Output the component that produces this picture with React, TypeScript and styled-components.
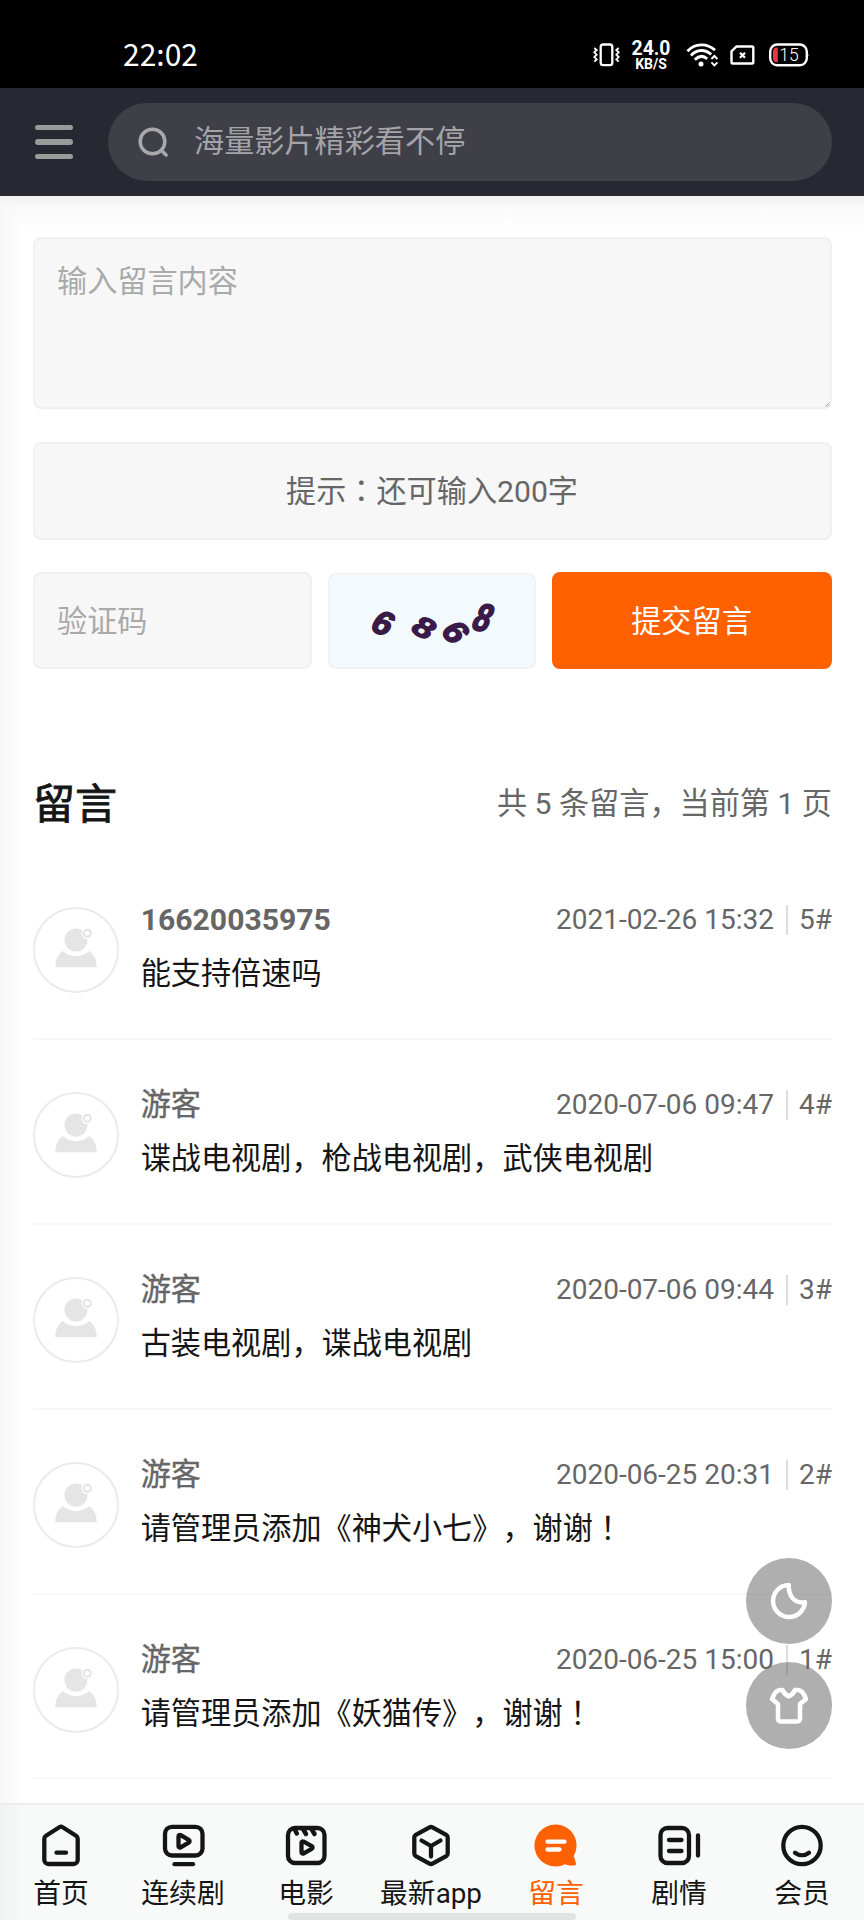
import React from "react";
import styled, { createGlobalStyle } from "styled-components";

const GlobalStyle = createGlobalStyle`
  *, *::before, *::after { box-sizing: border-box; }
  body {
    margin: 0;
    background: #fff;
    color: #151515;
    font-family: Roboto, "Noto Sans CJK SC", sans-serif;
    font-size: 30.15px;
    line-height: 1;
    text-spacing-trim: space-all;
  }
  button, input, textarea { font: inherit; color: inherit; }
`;

const Page = styled.div`
  position: relative;
  width: 864px;
  height: 1920px;
  display: flex;
  flex-direction: column;
  overflow: hidden;
  background: #fff;
`;

const StatusBar = styled.div`
  flex: none;
  height: 88px;
  padding: 22px 54px 0 123px;
  display: flex;
  align-items: center;
  justify-content: space-between;
  background: #000;
  color: #fff;
`;

const Clock = styled.div`
  margin-top: -4px;
  font: 400 30px/30px "Noto Sans CJK SC", sans-serif;
`;

const StatusIcons = styled.div`
  display: flex;
  align-items: center;
  svg { display: block; }
`;

const NetworkIcons = styled.div`
  display: flex;
  align-items: center;
  svg + svg { margin-left: 11px; }
  svg:last-child { margin-left: 14px; }
`;

const Speed = styled.div`
  width: 40px;
  margin: 2px 15px 0 11px;
  display: flex;
  flex-direction: column;
  align-items: center;
  font-weight: 700;
`;

const SpeedValue = styled.span`
  font-size: 19.4px;
  line-height: 16px;
`;

const SpeedUnit = styled.span`
  font-size: 14px;
  line-height: 14px;
`;

const Header = styled.header`
  flex: none;
  height: 108px;
  padding: 0 32px 0 35px;
  display: flex;
  align-items: center;
  background: #282832;
`;

const MenuButton = styled.button`
  width: 38px;
  height: 35px;
  margin-right: 35px;
  padding: 0;
  border: 0;
  background: none;
  display: flex;
  flex-direction: column;
  justify-content: space-between;
  span { height: 5.4px; border-radius: 3px; background: #999a9a; }
`;

const SearchBox = styled.div`
  flex: 1;
  height: 78px;
  padding-left: 30px;
  border-radius: 39px;
  display: flex;
  align-items: center;
  background: #3f3f48;
  color: #a4a4a8;
  svg { display: block; margin-right: 25px; }
`;

const Main = styled.main`
  flex: 1;
  min-height: 0;
  overflow: hidden;
  padding: 41px 32px 0 33px;
  background:
    linear-gradient(to bottom, #f0f0f0, rgba(248, 248, 248, 0.8) 10px, rgba(255, 255, 255, 0) 34px) top / 100% 34px no-repeat,
    linear-gradient(to right, #f7f7f7, rgba(255, 255, 255, 0) 24px),
    #fff;
`;

const MessageForm = styled.form`
  display: flex;
  flex-direction: column;
`;

const MessageInput = styled.textarea`
  display: block;
  width: 100%;
  height: 172px;
  margin-bottom: 33px;
  padding: 26px 22px;
  border: 2px solid #f0f0f0;
  border-radius: 8px;
  outline: 0;
  background: #f7f7f7;
  line-height: 34px;
  resize: none;
  &::placeholder { color: #aaa; opacity: 1; }
`;

const InputWrap = styled.div`
  position: relative;
`;

const Grip = styled.svg`
  position: absolute;
  right: 2px;
  bottom: 35px;
`;

const Hint = styled.div`
  height: 98px;
  margin-bottom: 32px;
  padding: 3px 1px 0 0;
  border: 2px solid #f0f0f0;
  border-radius: 8px;
  background: #f7f7f7;
  color: #666;
  display: flex;
  align-items: center;
  justify-content: center;
`;

const CenteredMark = styled.span`
  font-family: "Noto Sans CJK TC", sans-serif;
  line-height: 0;
`;

const SubmitRow = styled.div`
  display: flex;
  align-items: flex-end;
  gap: 16px;
  height: 97px;
`;

const CodeInput = styled.input`
  width: 279px;
  height: 97px;
  padding: 1px 22px 0;
  border: 2px solid #f0f0f0;
  border-radius: 8px;
  outline: 0;
  background: #f7f7f7;
  &::placeholder { color: #aaa; opacity: 1; }
`;

const Captcha = styled.div`
  width: 208px;
  height: 96px;
  border: 2px solid #eff1f2;
  border-radius: 8px;
  background: #f3fafe;
  svg { display: block; }
`;

const Submit = styled.button`
  flex: 1;
  height: 97px;
  padding: 3px 1px 0 0;
  border: 0;
  border-radius: 8px;
  background: #ff6000;
  color: #fff;
`;

const ListHeader = styled.div`
  margin-top: 103px;
  height: 63px;
  display: flex;
  align-items: center;
  justify-content: space-between;
  color: #666;
  h2 {
    margin: 3px 0 0;
    color: #151515;
    font-size: 42px;
    font-weight: 400;
    line-height: 50px;
    -webkit-text-stroke: 0.8px currentColor;
  }
  span { margin-top: 2px; }
`;

const Comments = styled.ul`
  list-style: none;
  margin: 20px 0 0;
  padding: 0;
`;

const Comment = styled.li`
  height: 184.9px;
  padding: 52px 0 0;
  border-bottom: 2px solid #f8f8f8;
  display: flex;
`;

const Avatar = styled.div`
  flex: none;
  width: 86px;
  height: 86px;
  margin-right: 21.7px;
  border: 2px solid #ebebeb;
  border-radius: 50%;
  svg { display: block; }
`;

const CommentBody = styled.div`
  flex: 1;
  p { margin: 22px 0 0; line-height: 34px; }
`;

const CommentTop = styled.div`
  height: 30px;
  margin-top: -1.8px;
  display: flex;
  align-items: center;
  justify-content: space-between;
  color: #666;
`;

const Author = styled.span<{ $member: boolean }>`
  font-weight: ${(p) => (p.$member ? 700 : 400)};
  -webkit-text-stroke: ${(p) => (p.$member ? "0" : "0.4px currentColor")};
`;

const Meta = styled.span`
  display: flex;
  align-items: center;
  font-size: 28px;
  line-height: 30px;
  i {
    width: 2px;
    height: 30px;
    margin: 0 11.5px;
    background: #dcdcdc;
  }
`;

const FloatTools = styled.div`
  position: absolute;
  right: 32px;
  top: 1558px;
  display: flex;
  flex-direction: column;
  gap: 18px;
`;

const FloatButton = styled.button`
  width: 86.4px;
  height: 86.4px;
  padding: 0;
  border: 0;
  border-radius: 50%;
  background: rgba(96, 96, 96, 0.5);
  display: flex;
  align-items: center;
  justify-content: center;
`;

const TabBar = styled.nav`
  position: relative;
  flex: none;
  height: 117px;
  border-top: 2px solid #ededed;
  background: linear-gradient(to right, #f1f3f2, rgba(248, 250, 249, 0) 24px), #f8faf9;
  display: grid;
  grid-template-columns: 122px 122px 124px 126px 124px 122px 124px;
`;

const Tab = styled.a<{ $active?: boolean }>`
  padding-top: 18px;
  display: flex;
  flex-direction: column;
  align-items: center;
  color: ${(p) => (p.$active ? "#ff6000" : "#151515")};
  font-size: 27.8px;
  line-height: 32px;
  white-space: nowrap;
  svg { display: block; margin-bottom: 10.5px; }
`;

const HomeIndicator = styled.div`
  position: absolute;
  left: 288px;
  bottom: 0;
  width: 288px;
  height: 7px;
  border-radius: 4px;
  background: #e2e4e3;
`;

const VibrateIcon = () => (
  <svg width="27" height="24" viewBox="0 0 27 24" fill="none" stroke="#fff" strokeWidth="2">
    <rect x="7.7" y="1.5" width="11.6" height="20.6" rx="2.4" strokeWidth="2.3" />
    <path d="M1.3 5l2.4 2-2.4 2.3 2.4 2.4-2.4 2.4 2.4 2.3-2.4 2.2M25.7 5l-2.4 2 2.4 2.3-2.4 2.4 2.4 2.4-2.4 2.3 2.4 2.2" strokeWidth="1.8" />
  </svg>
);

const WifiIcon = () => (
  <svg width="33" height="26" viewBox="0 0 33 26" fill="none" stroke="#fff" strokeWidth="2.9">
    <path d="M1.5 9.2C9 1 21 1 29 8.2" />
    <path d="M5 13.4C11 7 19 7 25.2 12.4" />
    <path d="M8.8 17.6C13 13.6 17.5 13.6 21.2 16.8" />
    <circle cx="15" cy="22" r="2.5" fill="#fff" stroke="none" />
    <path d="M25.4 17l3-3 3 3M25.4 20.4l3 3 3-3" strokeWidth="2" />
  </svg>
);

const SimIcon = () => (
  <svg width="25" height="20" viewBox="0 0 25 20" fill="none" stroke="#fff" strokeWidth="2.4">
    <path d="M6.5 1.5H22a1.3 1.3 0 0 1 1.3 1.3v14.4a1.3 1.3 0 0 1-1.3 1.3H2.8a1.3 1.3 0 0 1-1.3-1.3V6.3z" />
    <path d="M10 7.7l5 5M15 7.7l-5 5" strokeWidth="2.2" />
  </svg>
);

const BatteryIcon = () => (
  <svg width="41" height="24" viewBox="0 0 41 24">
    <path d="M37.5 8q3 4 0 8z" fill="#fff" stroke="#fff" />
    <rect x="1.2" y="1.5" width="36.6" height="20.8" rx="7" fill="none" stroke="#fff" strokeWidth="2.4" />
    <path d="M8.8 4.5v14.8H8a4 4 0 0 1-4-4V8.5a4 4 0 0 1 4-4z" fill="#ee3346" />
    <text x="10.3" y="18.3" fontFamily="Roboto" fontWeight="300" fontSize="17.5" fill="#fff">15</text>
  </svg>
);

const SearchIcon = () => (
  <svg width="31" height="31" viewBox="0 0 31 31" fill="none" stroke="#a9a9ab" strokeWidth="3.5" strokeLinecap="round">
    <circle cx="14.5" cy="14.5" r="12.3" />
    <path d="M23.5 23.5l4.6 4.6" />
  </svg>
);

const PersonIcon = () => (
  <svg width="82" height="82" viewBox="0 0 82 82" fill="#e5e5e5">
    <circle cx="41" cy="31" r="11.5" />
    <path d="M20.3 58.3c0-8 3-13.5 7.7-16.3 3.2 3.4 8 5.2 13 5.2s9.8-1.8 13-5.2c4.7 2.8 7.7 8.3 7.7 16.3z" />
    <circle cx="52.3" cy="24.3" r="5.8" fill="#fff" />
    <circle cx="52.3" cy="24.3" r="3.5" fill="none" stroke="#e3e3e3" strokeWidth="2" />
  </svg>
);

const MoonIcon = () => (
  <svg width="38" height="38" viewBox="0 0 38 38" fill="none" stroke="#fff" strokeWidth="4.5" strokeLinejoin="round">
    <path d="M18.7 3A16 16 0 1 0 35 20.2C25 22 18.4 14.5 18.7 3z" />
  </svg>
);

const ShirtIcon = () => (
  <svg width="40" height="38" viewBox="0 0 40 38" fill="none" stroke="#fff" strokeWidth="4.5" strokeLinejoin="round">
    <path d="M13.5 3c1 2.2 3 5 6.2 6.3C23 8 25 5.2 26 3h3c4 0 6.5 5 8 9l-6 5v15a2.5 2.5 0 0 1-2.5 2.5h-17A2.5 2.5 0 0 1 9 32V17l-6-5c1.5-4 4-9 8-9z" />
  </svg>
);

const TabIcon = ({ children }: { children: React.ReactNode }) => (
  <svg width="44" height="44" viewBox="0 0 44 44" fill="none" stroke="currentColor" strokeWidth="4.3" strokeLinecap="round" strokeLinejoin="round">
    {children}
  </svg>
);

const tabs: { label: string; active?: boolean; icon: React.ReactNode }[] = [
  {
    label: "首页",
    icon: (
      <>
        <path d="M20.3 4.2L7 12.7c-1.2.8-1.7 1.5-1.7 3V37a4 4 0 0 0 4 4h25.4a4 4 0 0 0 4-4V15.7c0-1.5-.5-2.2-1.7-3L23.7 4.2c-1.2-.8-2.2-.8-3.4 0z" />
        <path d="M17.5 29.7h9.5" />
      </>
    ),
  },
  {
    label: "连续剧",
    icon: (
      <>
        <rect x="4" y="3.8" width="37.5" height="28.7" rx="7" />
        <path d="M17.5 13.5v9.5c0 1.4 1 2 2.2 1.3l8-4.7c1.2-.8 1.2-2 0-2.7l-8-4.7c-1.2-.7-2.2 0-2.2 1.3z" />
        <path d="M13.5 41.2h18.5" />
      </>
    ),
  },
  {
    label: "电影",
    icon: (
      <>
        <rect x="4" y="5" width="36.5" height="35" rx="7" />
        <path d="M10.5 6l2.3 4.5M19 6l3 5M27.5 6l3 5" strokeWidth="4.5" />
        <path d="M17.5 20v9c0 1.4 1 2 2.2 1.3l8-4.5c1.2-.8 1.2-1.9 0-2.6l-8-4.5c-1.2-.7-2.2 0-2.2 1.3z" />
      </>
    ),
  },
  {
    label: "最新app",
    icon: (
      <>
        <path d="M20.5 4.4L6.8 11.8c-1 .6-1.5 1.4-1.5 2.6v16.2c0 1.2.5 2 1.5 2.6l13.7 7.4c1 .6 2 .6 3 0l13.7-7.4c1-.6 1.5-1.4 1.5-2.6V14.4c0-1.2-.5-2-1.5-2.6L23.5 4.4c-1-.6-2-.6-3 0z" />
        <path d="M12.5 17.5l9.5 5.5 9.5-5.5M22 23v10.5" />
      </>
    ),
  },
  {
    label: "留言",
    active: true,
    icon: (
      <>
        <path d="M22 1.5a21 21 0 1 0 9 39.7c2.3 1.2 5.5 1.6 9.3 1.3 1.2-.1 1.8-.8 1.6-2-.4-2-.9-4.5-2.2-7.5A21 21 0 0 0 22 1.5z" fill="currentColor" stroke="none" />
        <path d="M13.5 18.7h17M13.5 26.5h12" stroke="#fff" />
      </>
    ),
  },
  {
    label: "剧情",
    icon: (
      <>
        <rect x="3.5" y="5" width="28.5" height="35" rx="7" />
        <path d="M12 17h12.5M12 28h12.5M41 12.5v20" />
      </>
    ),
  },
  {
    label: "会员",
    icon: (
      <>
        <circle cx="22" cy="22.5" r="18.7" />
        <path d="M15 29.7c4.2 3.2 9.8 3.2 14 0" />
      </>
    ),
  },
];

const comments = [
  { author: "16620035975", date: "2021-02-26 15:32", floor: 5, text: "能支持倍速吗" },
  { author: "游客", date: "2020-07-06 09:47", floor: 4, text: "谍战电视剧，枪战电视剧，武侠电视剧" },
  { author: "游客", date: "2020-07-06 09:44", floor: 3, text: "古装电视剧，谍战电视剧" },
  { author: "游客", date: "2020-06-25 20:31", floor: 2, text: "请管理员添加《神犬小七》，谢谢", mark: "！" },
  { author: "游客", date: "2020-06-25 15:00", floor: 1, text: "请管理员添加《妖猫传》，谢谢", mark: "！" },
];

const captchaDigits = [
  { d: "6", x: 53.5, y: 48, r: 22, sx: 1.15, sy: 1.12 },
  { d: "8", x: 94.5, y: 52.5, r: 32, sx: 1.22, sy: 0.98 },
  { d: "6", x: 126, y: 57, r: 50, sx: 1.15, sy: 1.12 },
  { d: "8", x: 153.5, y: 42.5, r: 14, sx: 1, sy: 1.32 },
];

export default function App() {
  return (
    <>
      <GlobalStyle />
      <Page>
        <StatusBar>
          <Clock>22:02</Clock>
          <StatusIcons>
            <VibrateIcon />
            <Speed>
              <SpeedValue>24.0</SpeedValue>
              <SpeedUnit>KB/S</SpeedUnit>
            </Speed>
            <NetworkIcons>
              <WifiIcon />
              <SimIcon />
              <BatteryIcon />
            </NetworkIcons>
          </StatusIcons>
        </StatusBar>
        <Header>
          <MenuButton aria-label="菜单">
            <span />
            <span />
            <span />
          </MenuButton>
          <SearchBox>
            <SearchIcon />
            海量影片精彩看不停
          </SearchBox>
        </Header>
        <Main>
          <MessageForm>
            <InputWrap>
              <MessageInput placeholder="输入留言内容" />
              <Grip width="5" height="5" viewBox="0 0 5 5" stroke="#888" strokeWidth="0.8">
                <path d="M0.5 4.5l4-4M3 4.5L4.5 3" />
              </Grip>
            </InputWrap>
            <Hint>
              <span>
                提示<CenteredMark>：</CenteredMark>还可输入200字
              </span>
            </Hint>
            <SubmitRow>
              <CodeInput placeholder="验证码" />
              <Captcha>
                <svg width="204" height="92" viewBox="0 0 204 92">
                  {captchaDigits.map((c, i) => (
                    <text
                      key={i}
                      transform={`translate(${c.x} ${c.y}) rotate(${c.r}) skewX(-10) scale(${c.sx} ${c.sy})`}
                      y="10.5"
                      textAnchor="middle"
                      fontFamily="Liberation Sans"
                      fontWeight="700"
                      fontSize="30"
                      fill="#3a1a48"
                      stroke="#3a1a48"
                      strokeWidth="1.4"
                    >
                      {c.d}
                    </text>
                  ))}
                </svg>
              </Captcha>
              <Submit type="button">提交留言</Submit>
            </SubmitRow>
          </MessageForm>
          <ListHeader>
            <h2>留言</h2>
            <span>共 5 条留言，当前第 1 页</span>
          </ListHeader>
          <Comments>
            {comments.map((c) => (
              <Comment key={c.floor}>
                <Avatar>
                  <PersonIcon />
                </Avatar>
                <CommentBody>
                  <CommentTop>
                    <Author $member={c.author !== "游客"}>{c.author}</Author>
                    <Meta>
                      {c.date}
                      <i />
                      {c.floor}#
                    </Meta>
                  </CommentTop>
                  <p>
                    {c.text}
                    {c.mark && <CenteredMark>{c.mark}</CenteredMark>}
                  </p>
                </CommentBody>
              </Comment>
            ))}
          </Comments>
        </Main>
        <TabBar>
          {tabs.map((t) => (
            <Tab key={t.label} $active={t.active}>
              <TabIcon>{t.icon}</TabIcon>
              {t.label}
            </Tab>
          ))}
          <HomeIndicator />
        </TabBar>
        <FloatTools>
          <FloatButton aria-label="夜间模式">
            <MoonIcon />
          </FloatButton>
          <FloatButton aria-label="换肤">
            <ShirtIcon />
          </FloatButton>
        </FloatTools>
      </Page>
    </>
  );
}
